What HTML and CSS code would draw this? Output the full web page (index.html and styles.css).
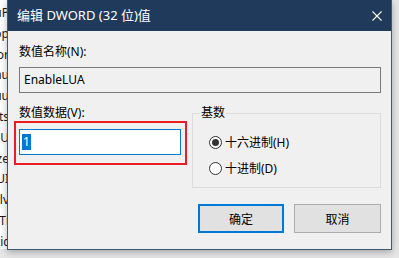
FILE: index.html
```html
<!DOCTYPE html>
<html lang="zh-CN">

<head>
	<meta charset="utf-8">
	<title>编辑 DWORD (32 位)值</title>
	<link rel="stylesheet" href="styles.css">
</head>

<body>
	<div class="screen">
		<div class="behind">
			<div class="frag">SetuP</div>
			<div class="frag">Shop</div>
			<div class="frag">Vendor</div>
			<div class="frag">Menu</div>
			<div class="frag">Mouu</div>
			<div class="frag">Fonts</div>
			<div class="frag">EnU</div>
			<div class="frag">Size</div>
			<div class="frag">ShellUI</div>
			<div class="frag">Levlv</div>
			<div class="frag">WinTi</div>
			<div class="frag">Stattic</div>
		</div>

		<div class="dialog">
			<div class="titlebar">
				<span class="title">编辑 DWORD (32 位)值</span>
				<svg class="close" width="10" height="10" viewBox="0 0 10 10">
					<path d="M0.5 0.5 L9.5 9.5 M9.5 0.5 L0.5 9.5" stroke="#fff" stroke-width="1.1" fill="none" />
				</svg>
			</div>

			<div class="content">
				<div class="label top">数值名称(N):</div>
				<div class="field readonly">EnableLUA</div>

				<div class="row">
					<div class="data">
						<div class="label">数值数据(V):</div>
						<div class="mark">
							<div class="field edit"><span class="sel">1</span></div>
						</div>
					</div>

					<fieldset class="base">
						<legend>基数</legend>
						<div class="radio first"><span class="dot on"></span>十六进制(H)</div>
						<div class="radio"><span class="dot"></span>十进制(D)</div>
					</fieldset>
				</div>

				<div class="buttons">
					<button class="btn default">确定</button>
					<button class="btn">取消</button>
				</div>
			</div>
		</div>
	</div>
</body>

</html>
```

FILE: styles.css
```css
* {
	margin: 0;
	box-sizing: border-box;
}

body {
	margin: 0;
	font-family: "Noto Sans", "Noto Sans CJK SC", sans-serif;
	font-size: 12px;
	color: #000;
	background: #e6e6e6;
}

.screen {
	display: flex;
	align-items: flex-start;
	width: 399px;
	height: 258px;
	overflow: hidden;
}

/* window behind the dialog */
.behind {
	width: 7px;
	height: 249px;
	background: #fff;
	overflow: hidden;
	padding-top: 3px;
}

.frag {
	display: flex;
	justify-content: flex-end;
	height: 20.8px;
	line-height: 20px;
	white-space: nowrap;
	margin-right: -2px;
	color: #1a1a1a;
}

.dialog {
	width: 385px;
	height: 250px;
	flex-shrink: 0;
	background: #f0f0f0;
	border: 1px solid #3f5873;
	border-top: none;
	box-shadow: 0 2px 7px rgba(0, 0, 0, 0.3);
}

.titlebar {
	display: flex;
	align-items: center;
	justify-content: space-between;
	height: 31px;
	padding: 0 9px;
	background: #1f3a5a;
	color: #fff;
}

.title {
	font-size: 13px;
	line-height: 18px;
	padding-bottom: 1px;
}

.close {
	display: block;
}

.content {
	padding: 12px 10px 0 11px;
}

.label {
	line-height: 16px;
}

.label.top {
	line-height: 18px;
	margin-bottom: 6px;
}

.field {
	height: 26px;
	line-height: 24px;
	padding-left: 4px;
	border: 1px solid #7a7a7a;
}

.readonly {
	background: #f0f0f0;
}

.row {
	display: flex;
	margin-top: 12px;
}

.data {
	width: 162px;
	flex-shrink: 0;
}

.mark {
	width: 173px;
	height: 44px;
	margin-left: -5px;
	padding: 6px 0 0 3px;
	border: 2px solid #ec1c24;
}

.edit {
	width: 162px;
	background: #fff;
	border-color: #0078d7;
	padding-left: 2px;
	padding-top: 2px;
	line-height: 20px;
}

.sel {
	display: inline-block;
	width: 9px;
	height: 16px;
	line-height: 16px;
	text-align: center;
	background: #0078d7;
	color: #fff;
}

.base {
	width: 189px;
	margin-left: 11px;
	padding: 0 7px 10px 7px;
	border: 1px solid #dcdcdc;
	min-width: 0;
}

.base legend {
	padding: 0 1px;
	line-height: 16px;
}

.radio {
	display: flex;
	align-items: center;
	height: 18px;
	margin-top: 8px;
	padding-left: 9px;
}

.radio.first {
	margin-top: 12px;
}

.dot {
	position: relative;
	width: 13px;
	height: 13px;
	margin-right: 3px;
	border: 1px solid #333;
	border-radius: 50%;
	background: #fff;
}

.dot.on::after {
	content: "";
	position: absolute;
	left: 2px;
	top: 2px;
	width: 7px;
	height: 7px;
	border-radius: 50%;
	background: #333;
}

.buttons {
	display: flex;
	justify-content: flex-end;
	gap: 10px;
	margin-top: 16px;
}

.btn {
	width: 87px;
	height: 29px;
	font-family: inherit;
	font-size: 12px;
	color: #000;
	background: #e1e1e1;
	border: 1px solid #adadad;
	padding: 0;
}

.btn.default {
	width: 86px;
	border: 2px solid #0078d7;
}
```
